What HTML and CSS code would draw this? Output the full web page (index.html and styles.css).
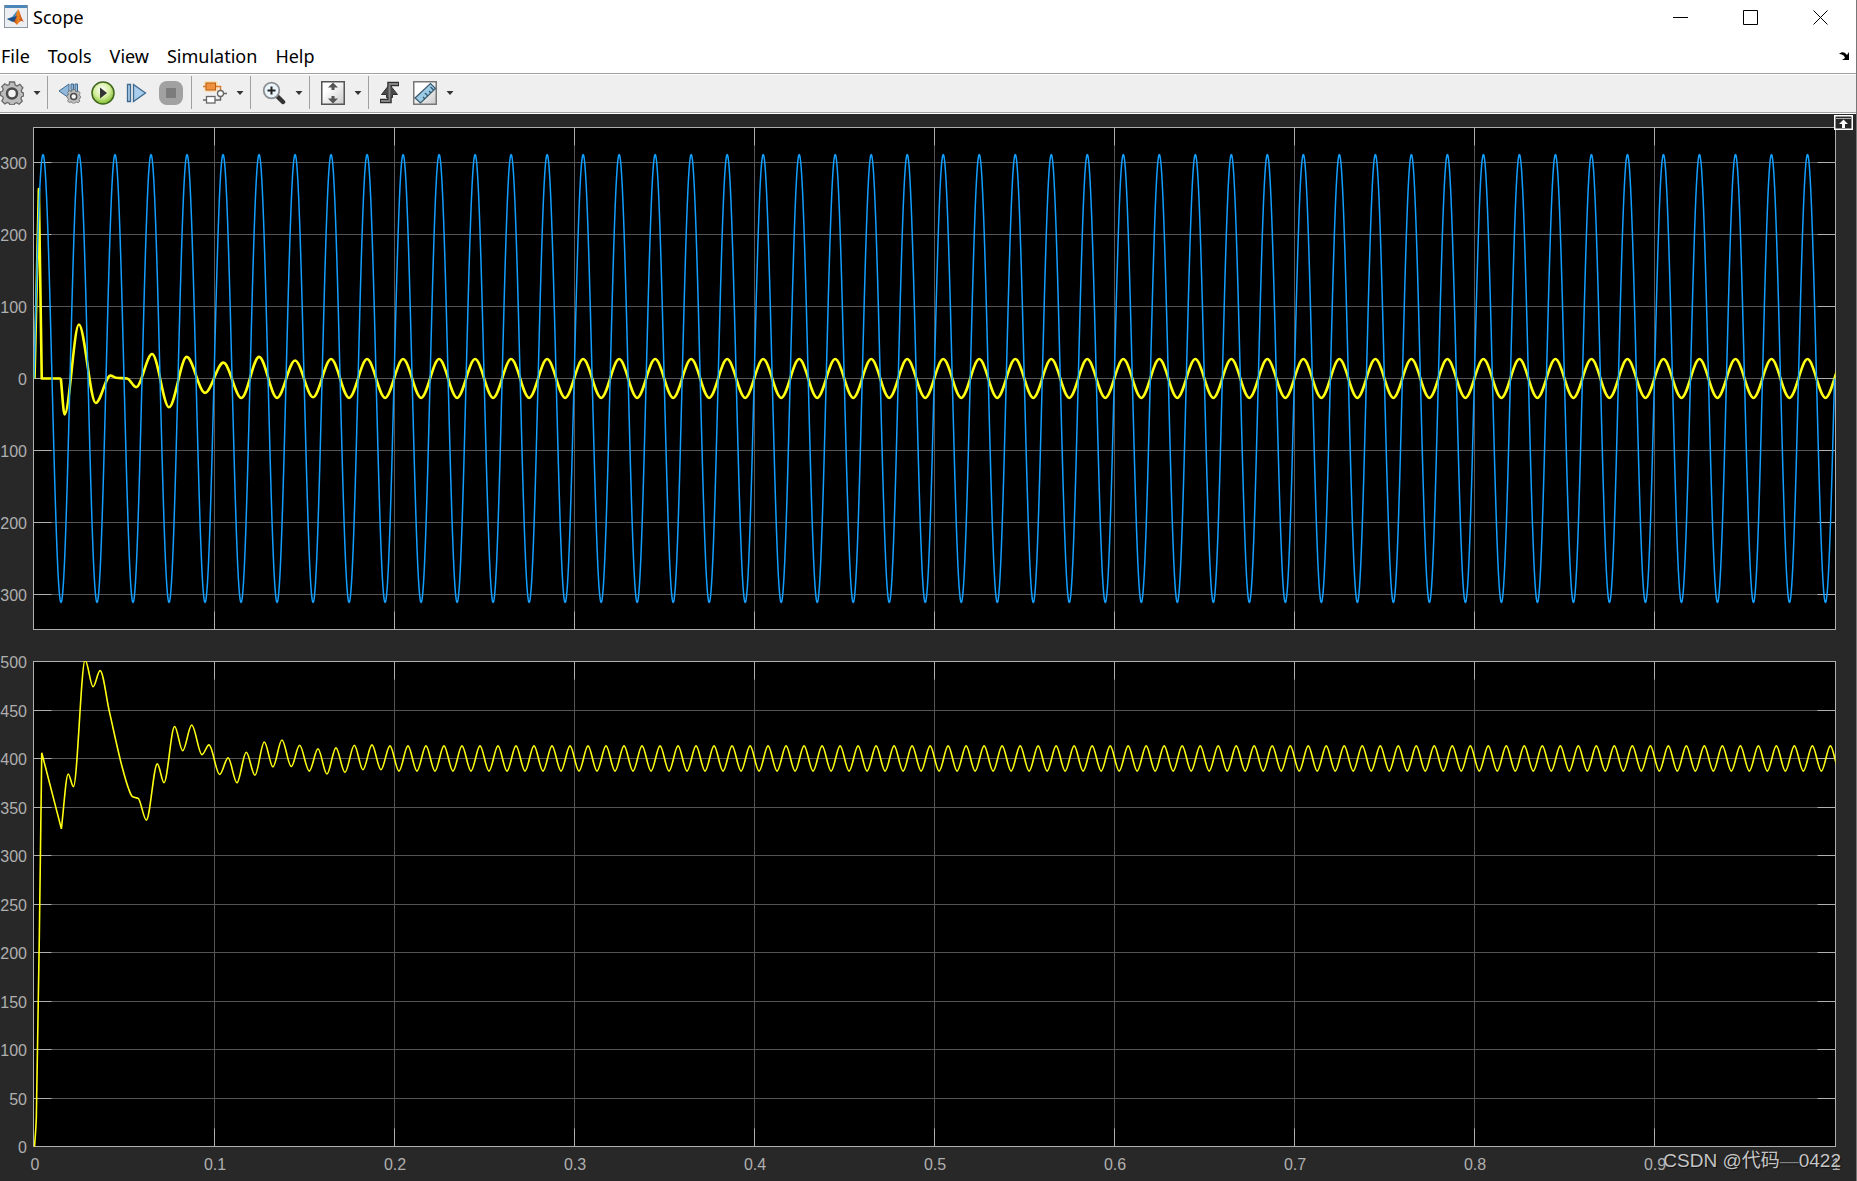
FILE: index.html
```html
<!DOCTYPE html>
<html lang="en">
<head>
<meta charset="utf-8">
<title>Scope</title>
<link rel="stylesheet" href="styles.css">
</head>
<body>
<svg class="symbols" aria-hidden="true">
  <symbol id="gear" viewBox="0 0 24 24"><path d="M9.500 1h5l.7 3 2 .9 2.700-1.600 3 3.500-1.700 2.500.6 1.900 1.700.8v3l-1.900.7-.7 1.900 1.400 2.600-3.200 3-2.500-1.500-1.900.8-.7 1.500h-4l-.7-1.700-1.900-.8-2.600 1.400-3-3 1.500-2.500-.7-2L.5 14.500v-3.500l2-.9.8-1.900-1.500-2.500 3-3 2.500 1.500 2-.7z" fill="#bdbdbd" stroke="#6a6a6a" stroke-width="1.300"/><circle cx="12" cy="12.500" r="5" fill="#f4f4f4" stroke="#4a4a4a" stroke-width="2.500"/></symbol>
  <symbol id="caret" viewBox="0 0 14 24"><path d="M3.500 10h7L7 14z" fill="#333"/></symbol>
</svg>
<div class="window">
  <header class="titlebar">
    <svg class="app-icon" viewBox="0 0 24 24" aria-hidden="true">
      <defs><linearGradient id="flame" x1="0" x2="1"><stop offset="0" stop-color="#a3211a"/><stop offset=".5" stop-color="#f08a1e"/><stop offset="1" stop-color="#b5301a"/></linearGradient></defs>
      <rect x=".5" y=".5" width="23" height="22" fill="#eceef1" stroke="#8e99a5"/>
      <rect x="1" y="0" width="22" height="3" fill="#4d86b8"/>
      <path d="M3 14l5-2 4-5 2-2-4 10-2 2z" fill="#3f8fc4"/>
      <path d="M8 16l3-4 3-8c2 2 3 9 6 13-3-2-4-1-7 3-1-2-3-3-5-4z" fill="url(#flame)"/>
      <path d="M3 14l5 2 2 1 3-6-4 1z" fill="#1f4f86"/>
    </svg>
    <h1 class="title">Scope</h1>
    <div class="controls">
      <button class="control" aria-label="Minimize"><svg width="16" height="16"><path d="M0 8.500H15"/></svg></button>
      <button class="control" aria-label="Maximize"><svg width="16" height="16"><path d="M.5 1.500h14v14h-14z"/></svg></button>
      <button class="control" aria-label="Close"><svg width="16" height="16"><path d="M.5 1.500l14 14M14.500 1.500l-14 14"/></svg></button>
    </div>
  </header>
  <nav class="menubar">
    <button class="menu">File</button>
    <button class="menu">Tools</button>
    <button class="menu">View</button>
    <button class="menu">Simulation</button>
    <button class="menu">Help</button>
    <button class="dock" aria-label="Dock"><svg width="12" height="10" viewBox="0 0 12 10"><path d="M0 3C3 0 6 1 8 4l2-3v8H3l3-2C5 4 3 3 0 3z"/></svg></button>
  </nav>
  <div class="toolbar" role="toolbar">
    <div class="group group-first">
      <button class="tool" aria-label="Settings"><svg viewBox="0 0 24 24"><use href="#gear"/></svg></button>
      <button class="drop" aria-label="Settings menu"><svg viewBox="0 0 14 24"><use href="#caret"/></svg></button>
    </div>
    <div class="group group-run">
      <button class="tool" aria-label="Stepping options"><svg viewBox="0 0 24 24"><path d="M2 10L12 3v14z M14 3h2.500v8H14z M18 3h2.500v8H18z" fill="#8fb8da" stroke="#3e688e"/><g transform="translate(9.500 8) scale(.6)"><use href="#gear" width="24" height="24"/></g></svg></button>
      <button class="tool" aria-label="Run"><svg viewBox="0 0 24 24"><defs><radialGradient id="run" cx=".45" cy=".35" r=".65"><stop offset="0" stop-color="#fff"/><stop offset=".55" stop-color="#d5ee9c"/><stop offset="1" stop-color="#7cba2c"/></radialGradient></defs><circle cx="12" cy="12" r="11" fill="url(#run)" stroke="#3f641c" stroke-width="1.500"/><path d="M9 6.500L16 12l-7 5.500z" fill="#333"/></svg></button>
      <button class="tool" aria-label="Step forward"><svg viewBox="0 0 24 24"><path d="M2.500 3.500h3v17h-3z M8.500 3.500L20.500 12l-12 8.500z" fill="#a9cdea" stroke="#3e688e" stroke-width="1.300"/></svg></button>
      <button class="tool" aria-label="Stop"><svg viewBox="0 0 24 24"><rect x="0" y="0" width="24" height="24" rx="8" fill="#a1a1a1"/><rect x="7" y="7" width="10" height="10" fill="#7c7c7c"/></svg></button>
    </div>
    <div class="group">
      <button class="tool" aria-label="Highlight block"><svg viewBox="0 0 24 24"><rect x="1" y="0" width="14" height="11" rx="3" fill="#fbdcae"/><path d="M0 5.500h3M12 5.500h5.500V9" fill="none" stroke="#d97a2a" stroke-width="1.500"/><path d="M20 12.500h4M0 19h3M12 19h5.500v-4" fill="none" stroke="#666" stroke-width="1.500"/><rect x="3" y="2" width="9.500" height="7" fill="#f0913f" stroke="#b85f17"/><rect x="3.500" y="15.500" width="8.500" height="6.500" fill="#fff" stroke="#666" stroke-width="1.300"/><circle cx="17.500" cy="12.500" r="3" fill="#fff" stroke="#666" stroke-width="1.300"/></svg></button>
      <button class="drop" aria-label="Highlight menu"><svg viewBox="0 0 14 24"><use href="#caret"/></svg></button>
    </div>
    <div class="group">
      <button class="tool" aria-label="Zoom"><svg viewBox="0 0 24 24"><path d="M15 15l6 6" stroke="#333" stroke-width="4.500" stroke-linecap="round"/><circle cx="9.500" cy="9.500" r="7.800" fill="#eaf4fb" stroke="#8b8f93" stroke-width="1.800"/><path d="M9.500 5.500v8M5.500 9.500h8" stroke="#222" stroke-width="2"/></svg></button>
      <button class="drop" aria-label="Zoom menu"><svg viewBox="0 0 14 24"><use href="#caret"/></svg></button>
    </div>
    <div class="group">
      <button class="tool" aria-label="Scale axes limits"><svg viewBox="0 0 24 24"><defs><linearGradient id="sheet" x2="1" y2="1"><stop offset=".3" stop-color="#fff"/><stop offset="1" stop-color="#c9c9c9"/></linearGradient></defs><rect x=".75" y=".75" width="22.500" height="22.500" fill="url(#sheet)" stroke="#555" stroke-width="1.500"/><path d="M12 1.500l5 5h-3.500V9h-3V6.500H7z M12 22.500l5-5h-3.500V15h-3v2.500H7z" fill="#555"/></svg></button>
      <button class="drop" aria-label="Scale menu"><svg viewBox="0 0 14 24"><use href="#caret"/></svg></button>
    </div>
    <div class="group group-last">
      <button class="tool" aria-label="Triggers"><svg viewBox="0 0 24 24"><path d="M1 20h9.500V3H20" fill="none" stroke="#2f2f2f" stroke-width="4.500"/><path d="M10.500 3.500l8 10h-5v3h-6v-3h-5z" fill="#4a4a4a" stroke="#2f2f2f"/><path d="M2 20h8.500V3h8.500" fill="none" stroke="#858585" stroke-width="1.800"/></svg></button>
      <button class="tool" aria-label="Measurements"><svg viewBox="0 0 24 24"><rect x=".75" y=".75" width="22.500" height="22.500" fill="url(#sheet)" stroke="#777" stroke-width="1.500"/><path d="M2 17L17.500 2.500l5 5L7.500 22z" fill="#9ccbe6" stroke="#3d5a6c" stroke-width="1.200"/><path d="M12 18l-2-2M15 15l-3-3M18 12l-2-2M20.500 9l-3-3" stroke="#2d566f" stroke-width="1.200"/></svg></button>
      <button class="drop" aria-label="Measurements menu"><svg viewBox="0 0 14 24"><use href="#caret"/></svg></button>
    </div>
  </div>
  <main class="plots">
    <svg class="plot" id="voltage" role="img" aria-label="Source voltage and current"></svg>
    <svg class="plot" id="output" role="img" aria-label="Output voltage"></svg>
    <button class="expand" aria-label="Maximize axes"><svg width="19" height="15" viewBox="0 0 19 15"><path d="M.75.75h17.500v13.500H.75z" fill="#282828" stroke="#fff" stroke-width="1.500"/><path d="M2 3.500h15" stroke="#aaa"/><path d="M9.500 4.500l4.500 4.500h-3v4H8V9H5z" fill="#fff"/></svg></button>
    <div class="watermark">CSDN @代码<span class="dash">—</span>0422</div>
  </main>
</div>
<script src="scope.js"></script>
</body>
</html>
```
FILE: styles.css
```css
* { box-sizing: border-box; }

body {
  margin: 0;
  background: #282828;
  font-family: "Noto Sans", "Open Sans", sans-serif;
}

button {
  padding: 0;
  border: 0;
  background: none;
  font: inherit;
  color: inherit;
}

.window {
  display: flex;
  flex-direction: column;
  min-height: 100vh;
  border-right: 1px solid #777;
}

.titlebar {
  display: flex;
  align-items: center;
  height: 34px;
  padding-left: 4px;
  background: #fff;
}

.app-icon { width: 24px; height: 24px; }

.title {
  flex: 1;
  margin: 0 0 0 5px;
  font-size: 18px;
  font-weight: 400;
  line-height: 24px;
}

.controls { display: flex; }

.control {
  display: flex;
  align-items: center;
  justify-content: center;
  width: 70px;
  height: 34px;
}

.control svg { fill: none; stroke: #000; }

.menubar {
  display: flex;
  align-items: center;
  gap: 18px;
  height: 39px;
  padding: 4px 5px 0 1px;
  background: #fff;
  font-size: 18px;
  line-height: 24px;
}

.dock { display: flex; margin-left: auto; }

.toolbar {
  display: flex;
  align-items: center;
  height: 41px;
  padding-bottom: 2px;
  border-top: 1px solid #a0a0a0;
  border-bottom: 1px solid #fff;
  background: #efefef;
  box-shadow: inset 0 1px #fff, inset 0 -1px #a0a0a0;
}

.group {
  display: flex;
  align-items: center;
  gap: 10px;
  height: 33px;
  padding: 0 3px 0 11px;
  border-right: 1px solid #a0a0a0;
}

.group-first { padding-left: 0; }
.group-run { padding: 0 8px 0 9px; }
.group-last { padding-left: 10px; border-right: 0; }

.tool, .drop { display: flex; width: 24px; height: 24px; }
.drop { width: 14px; margin-left: -4px; }
.tool svg, .drop svg { width: 100%; height: 100%; }

.plots {
  position: relative;
  flex: 1;
  display: grid;
  grid-template-rows: minmax(0, 531fr) minmax(0, 536fr);
  min-height: 480px;
  background: #282828;
}

.plot {
  display: block;
  width: 100%;
  height: 100%;
  min-height: 0;
  font-family: "Liberation Sans", Arial, sans-serif;
  font-size: 16px;
}

.area { fill: #000; }
.frame { fill: none; stroke: #afafaf; }
.grid { fill: none; stroke: #545454; }
.ticks { fill: none; stroke: #afafaf; }
.label { fill: #afafaf; }
.label-y { text-anchor: end; }
.label-x { text-anchor: middle; }

.trace { fill: none; stroke-linejoin: round; }
.trace-blue { stroke: #139fff; stroke-width: 1.5px; }
.trace-yellow { stroke: #ffff11; stroke-width: 1.6px; }
.trace-bold { stroke-width: 2.6px; }

.expand {
  position: absolute;
  top: 1px;
  right: 3px;
  display: flex;
}

.watermark {
  position: absolute;
  right: 15px;
  bottom: 8px;
  color: #c4c4c4;
  font-family: "Liberation Sans", "Noto Sans CJK SC", sans-serif;
  font-size: 19px;
  line-height: 24px;
  text-shadow: 1px 1px 1px #111;
}

.dash { color: #808080; }

.symbols { position: absolute; width: 0; height: 0; }
```
FILE: scope.js
```js
const NS = 'http://www.w3.org/2000/svg';

// Line current: spike, start-up transient, then a steady 50 Hz sine.
const current = [
  [[0.0003, 0], [0.0027, 263], [0.0043, 0], [0.0149, 0]],
  [[0.0149, 0], [0.017, -50], [0.0249, 75], [0.0343, -34], [0.0425, 4], [0.0455, 1], [0.0517, 0],
    [0.0567, -12], [0.0656, 34], [0.075, -40], [0.0848, 30], [0.095, -20], [0.1052, 22],
    [0.1152, -27], [0.125, 30], [0.135, -27], [0.145, 25], [0.155, -26]]
];
for (let i = 0; i < 86; i++) current[1].push([0.165 + i * 0.01, i % 2 ? -27 : 27]);

// DC output: charge-up, discharge, damped swing, then a steady 100 Hz ripple.
const output = [
  [[0.0003, 0], [0.0013, 30], [0.0036, 306], [0.0043, 406]],
  [[0.0043, 406], [0.0152, 327.5]],
  [[0.0152, 327.5], [0.019, 384], [0.0219, 371], [0.0284, 501.5], [0.0328, 474], [0.0367, 490.6],
    [0.0419, 448], [0.0487, 393], [0.0525, 369], [0.0545, 361], [0.0561, 359.7], [0.0578, 359],
    [0.0624, 336.5], [0.0685, 394.5], [0.0722, 375], [0.0781, 433], [0.0826, 408],
    [0.0876, 434.5], [0.0933, 404], [0.0972, 414], [0.1031, 383.5], [0.1078, 400.6],
    [0.1127, 375], [0.1179, 406.5], [0.1227, 382.7], [0.1279, 417], [0.1327, 391.4],
    [0.1377, 419], [0.1429, 391.7], [0.1475, 413.6], [0.1529, 387], [0.1577, 410],
    [0.1627, 384], [0.1677, 411], [0.1727, 385.7], [0.1779, 413.6], [0.1827, 388.4],
    [0.1877, 414], [0.1927, 388.4]]
];
for (let i = 0; i < 163; i++) output[2].push([0.1977 + i * 0.005, i % 2 ? 387 : 413]);

// Source voltage, 311 V peak at 50 Hz.
const source = [];
for (let i = 0; i <= 4000; i++) source.push([i / 4000, 311 * Math.sin(i / 4000 * 100 * Math.PI)]);

// Monotone cubic through the points, so that every extremum stays where it is given.
function smooth(points, X, Y) {
  const n = points.length;
  const slope = [];
  for (let i = 0; i < n - 1; i++) {
    slope.push((points[i + 1][1] - points[i][1]) / (points[i + 1][0] - points[i][0]));
  }
  const m = points.map((p, i) => {
    if (i === 0) return slope[0];
    if (i === n - 1) return slope[n - 2];
    const a = slope[i - 1], b = slope[i];
    return a * b <= 0 ? 0 : 2 * a * b / (a + b);
  });
  let d = `M${X(points[0][0])} ${Y(points[0][1])}`;
  for (let i = 0; i < n - 1; i++) {
    const [t0, v0] = points[i], [t1, v1] = points[i + 1];
    const h = (t1 - t0) / 3;
    d += `C${X(t0 + h)} ${Y(v0 + m[i] * h)} ${X(t1 - h)} ${Y(v1 - m[i + 1] * h)} ${X(t1)} ${Y(v1)}`;
  }
  return d;
}

function straight(points, X, Y) {
  return 'M' + points.map(([t, v]) => `${X(t).toFixed(2)} ${Y(v).toFixed(2)}`).join('L');
}

function add(parent, name, attrs, text) {
  const el = document.createElementNS(NS, name);
  for (const key in attrs) el.setAttribute(key, attrs[key]);
  if (text !== undefined) el.textContent = text;
  parent.appendChild(el);
  return el;
}

function draw(id, opts) {
  const svg = document.getElementById(id);
  svg.replaceChildren();
  const { width, height } = svg.getBoundingClientRect();
  const left = 33.5, right = width - 20.5;
  const top = opts.top + 0.5, bottom = height - opts.bottom + 0.5;
  const X = t => 34 + t * (width - 55.5);
  const Y = v => bottom - (v - opts.min) / (opts.max - opts.min) * (bottom - top);
  const snap = v => Math.floor(v) + 0.5;
  const box = { x: left, y: top, width: right - left, height: bottom - top };
  add(svg, 'rect', { class: 'area', ...box });

  let grid = '', ticks = '';
  for (let i = 1; i < 10; i++) {
    const x = snap(X(i / 10));
    grid += `M${x} ${top}V${bottom}`;
    ticks += `M${x} ${top}v18M${x} ${bottom}v-18`;
  }
  for (const v of opts.values) {
    const y = snap(Y(v));
    if (v !== opts.min && v !== opts.max) {
      grid += `M${left} ${y}H${right}`;
      ticks += `M${left} ${y}h18M${right} ${y}h-18`;
    }
    add(svg, 'text', { class: 'label label-y', x: 27, y: y + 6.5 }, Math.abs(v));
  }
  add(svg, 'path', { class: 'grid', d: grid });
  add(svg, 'path', { class: 'ticks', d: ticks });
  add(svg, 'rect', { class: 'frame', ...box });

  const clip = add(svg, 'clipPath', { id: id + '-clip' });
  add(clip, 'rect', { ...box, y: top - 0.5, height: bottom - top + 1 });
  const traces = add(svg, 'g', { 'clip-path': `url(#${id}-clip)` });
  for (const trace of opts.traces) {
    add(traces, 'path', { class: 'trace ' + trace.style, d: trace.path(X, Y) });
  }
  if (opts.timeLabels) {
    for (let i = 0; i <= 10; i++) {
      add(svg, 'text', { class: 'label label-x', x: Math.round(X(i / 10)) + 1, y: bottom + 23.5 }, i / 10);
    }
  }
}

function drawAll() {
  draw('voltage', {
    top: 13, bottom: 16, min: -348.6, max: 348.6,
    values: [300, 200, 100, 0, -100, -200, -300],
    traces: [
      { style: 'trace-yellow trace-bold', path: (X, Y) => straight(current[0], X, Y) + smooth(current[1], X, Y) },
      { style: 'trace-blue', path: (X, Y) => straight(source, X, Y) }
    ]
  });
  draw('output', {
    top: 16, bottom: 35, min: 0, max: 500, timeLabels: true,
    values: [500, 450, 400, 350, 300, 250, 200, 150, 100, 50, 0],
    traces: [
      { style: 'trace-yellow', path: (X, Y) => output.map(part => smooth(part, X, Y)).join('') }
    ]
  });
}

drawAll();
window.addEventListener('resize', drawAll);
```
